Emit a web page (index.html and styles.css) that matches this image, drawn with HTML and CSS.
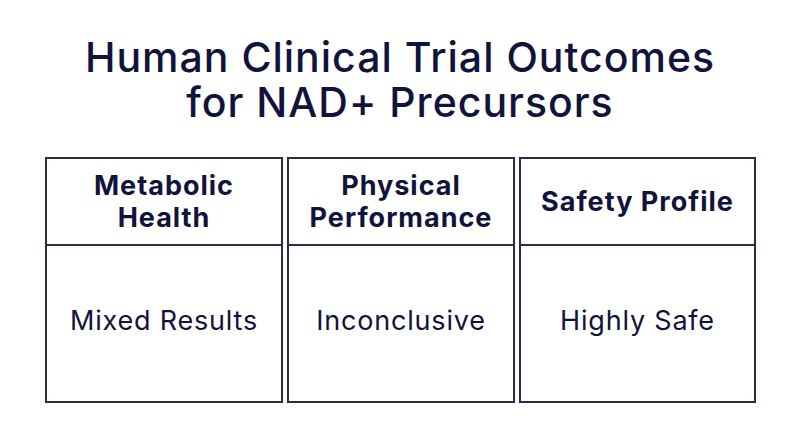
FILE: index.html
```html
<!DOCTYPE html>
<html>
<head>
<meta charset="utf-8">
<link rel="stylesheet" href="styles.css">
</head>
<body>
<div class="page">
  <h1 class="title">Human Clinical Trial Outcomes<br>for NAD+ Precursors</h1>
  <div class="grid">
    <div class="col col-1">
      <div class="head">Metabolic<br>Health</div>
      <div class="body">Mixed Results</div>
    </div>
    <div class="col col-2">
      <div class="head">Physical<br>Performance</div>
      <div class="body">Inconclusive</div>
    </div>
    <div class="col col-3">
      <div class="head">Safety Profile</div>
      <div class="body">Highly Safe</div>
    </div>
  </div>
</div>
</body>
</html>
```
FILE: styles.css
```css
html, body {
  margin: 0;
  padding: 0;
  background: #ffffff;
}
body {
  width: 800px;
  height: 447px;
  overflow: hidden;
  font-family: Inter, "Noto Sans", sans-serif;
  color: #11133a;
}
.page {
  display: flex;
  flex-direction: column;
  align-items: center;
}
.title {
  margin: 35px 0 0 0;
  font-size: 41px;
  font-weight: 500;
  line-height: 45px;
  text-align: center;
  letter-spacing: 1px;
  color: #11133a;
}
.grid {
  margin-top: 32px;
  display: flex;
  gap: 4px;
  margin-left: 1px;
}
.col {
  display: flex;
  flex-direction: column;
  border: 2px solid #2b2d48;
  box-sizing: border-box;
  height: 246px;
}
.col-1 { width: 238px; }
.col-2 { width: 228px; }
.col-3 { width: 237px; }
.head {
  height: 87px;
  border-bottom: 2px solid #2b2d48;
  display: flex;
  align-items: center;
  justify-content: center;
  text-align: center;
  font-size: 27px;
  font-weight: 700;
  line-height: 32px;
  letter-spacing: 1px;
  padding-top: 1px;
  box-sizing: border-box;
}
.body {
  flex: 1;
  display: flex;
  align-items: center;
  justify-content: center;
  font-size: 27px;
  font-weight: 400;
  letter-spacing: 0.8px;
  padding-bottom: 6px;
}
```
